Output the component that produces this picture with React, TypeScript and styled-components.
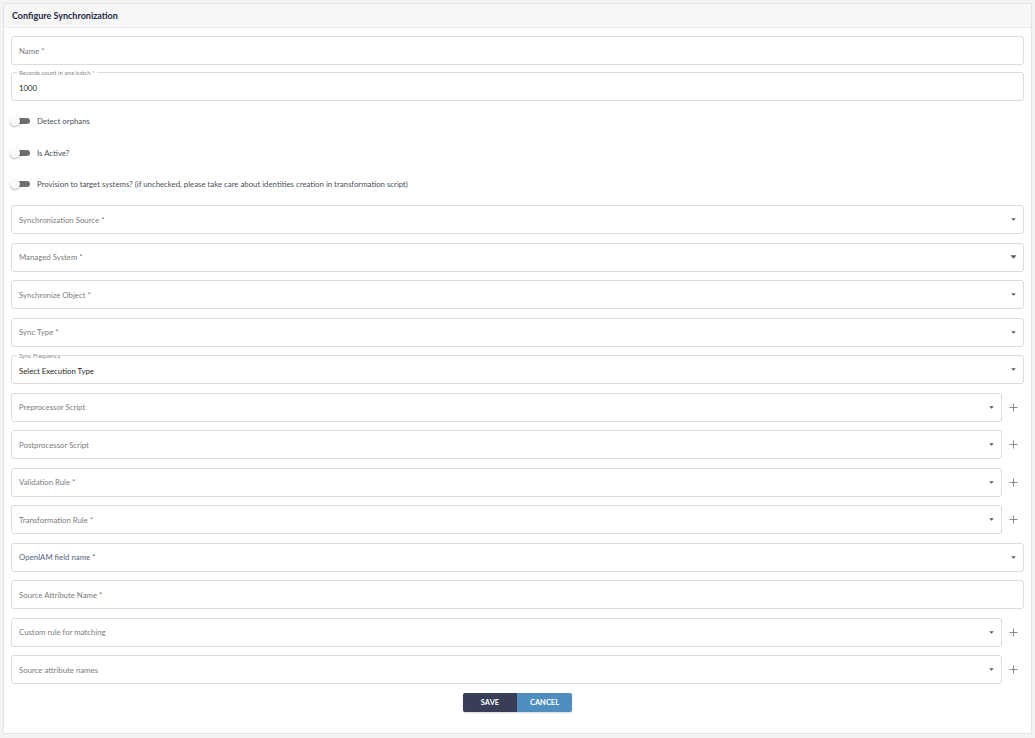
import { createGlobalStyle, styled } from "styled-components";

const GlobalStyle = createGlobalStyle`
  html, body {
    margin: 0;
    padding: 0;
    background: #f3f3f3;
    font-family: Lato, "Open Sans", "Liberation Sans", sans-serif;
  }
`;

type Field = {
  label: string;
  kind: "input" | "select";
  plus?: boolean;
  value?: string;
  legend?: string;
  accent?: boolean;
  bigCaret?: boolean;
};

const topFields: Field[] = [
  { label: "Name *", kind: "input" },
  { label: "Records count in one batch *", kind: "input", value: "1000", legend: "Records count in one batch *" },
];

const toggles = [
  "Detect orphans",
  "Is Active?",
  "Provision to target systems? (if unchecked, please take care about identities creation in transformation script)",
];

const selectFields: Field[] = [
  { label: "Synchronization Source *", kind: "select" },
  { label: "Managed System *", kind: "select", bigCaret: true },
  { label: "Synchronize Object *", kind: "select" },
  { label: "Sync Type *", kind: "select" },
  { label: "Select Execution Type", kind: "select", value: "Select Execution Type", legend: "Sync Frequency" },
  { label: "Preprocessor Script", kind: "select", plus: true },
  { label: "Postprocessor Script", kind: "select", plus: true },
  { label: "Validation Rule *", kind: "select", plus: true },
  { label: "Transformation Rule *", kind: "select", plus: true },
  { label: "OpenIAM field name *", kind: "select", accent: true },
  { label: "Source Attribute Name *", kind: "input" },
  { label: "Custom rule for matching", kind: "select", plus: true },
  { label: "Source attribute names", kind: "select", plus: true },
];

const Caret: React.FC<{ big?: boolean }> = ({ big }) => (
  <svg width={big ? 7 : 5} height={big ? 4 : 3} viewBox="0 0 6 4" style={{ marginRight: big ? 0 : 1 }}>
    <path d="M0 0.3 L6 0.3 L3 3.7 Z" fill="#555" />
  </svg>
);

const Plus = () => (
  <svg width="9" height="9" viewBox="0 0 9 9">
    <path d="M4.5 0.5 V8.5 M0.5 4.5 H8.5" stroke="#8a8a8a" strokeWidth="1" />
  </svg>
);

const FormField: React.FC<{ field: Field }> = ({ field }) => (
  <FieldRow>
    <Box>
      {field.legend && <Legend>{field.legend}</Legend>}
      <BoxText $filled={!!field.value} $accent={field.accent}>
        {field.value ?? field.label}
      </BoxText>
      {field.kind === "select" && <Caret big={field.bigCaret} />}
    </Box>
    {field.plus && (
      <PlusButton>
        <Plus />
      </PlusButton>
    )}
  </FieldRow>
);

export default function App() {
  return (
    <>
      <GlobalStyle />
      <Card>
        <Header>Configure Synchronization</Header>
        <Body>
          <Stack $gap={7}>
            {topFields.map((f) => (
              <FormField key={f.label} field={f} />
            ))}
          </Stack>
          <Toggles>
            {toggles.map((t) => (
              <ToggleRow key={t}>
                <Switch>
                  <Track />
                  <Knob />
                </Switch>
                <ToggleLabel>{t}</ToggleLabel>
              </ToggleRow>
            ))}
          </Toggles>
          <Stack $gap={8.5}>
            {selectFields.map((f) => (
              <FormField key={f.label} field={f} />
            ))}
          </Stack>
          <Actions>
            <ActionButton $variant="primary">Save</ActionButton>
            <ActionButton $variant="secondary">Cancel</ActionButton>
          </Actions>
        </Body>
      </Card>
    </>
  );
}

const Card = styled.div`
  margin: 3px 3px 0 3px;
  height: 731px;
  box-sizing: border-box;
  background: #fff;
  border: 1px solid #e4e4e4;
  display: flex;
  flex-direction: column;
`;

const Header = styled.div`
  height: 23px;
  display: flex;
  align-items: center;
  padding-left: 8px;
  background: #f7f7f7;
  border-bottom: 1px solid #ececec;
  font-size: 9px;
  font-weight: 700;
  color: #1d2742;
`;

const Body = styled.div`
  padding: 8px 7px 0 7px;
  display: flex;
  flex-direction: column;
`;

const Stack = styled.div<{ $gap: number }>`
  display: flex;
  flex-direction: column;
  gap: ${({ $gap }) => $gap}px;
`;

const FieldRow = styled.div`
  display: flex;
  align-items: center;
`;

const Box = styled.div`
  position: relative;
  flex: 1;
  height: 29px;
  box-sizing: border-box;
  border: 1px solid #dcdcdc;
  border-radius: 3px;
  display: flex;
  align-items: center;
  justify-content: space-between;
  padding: 0 6px 0 7px;
`;

const Legend = styled.span`
  position: absolute;
  top: -4px;
  left: 5px;
  padding: 0 2px;
  background: #fff;
  font-size: 6px;
  line-height: 7px;
  color: #8a8a8a;
`;

const BoxText = styled.span<{ $filled: boolean; $accent?: boolean }>`
  font-size: 7.8px;
  color: ${({ $filled, $accent }) => ($filled ? "#262626" : $accent ? "#56637d" : "#7d7d7d")};
  ${({ $filled }) => $filled && "margin-top: 2px;"}
`;

const PlusButton = styled.div`
  width: 21px;
  display: flex;
  justify-content: center;
  align-items: center;
  padding-left: 1px;
`;

const Toggles = styled.div`
  display: flex;
  flex-direction: column;
  margin: 4px 0 5px 0;
`;

const ToggleRow = styled.div`
  height: 31.7px;
  display: flex;
  align-items: center;
  gap: 7px;
`;

const Switch = styled.div`
  position: relative;
  width: 20px;
  height: 10px;
  margin-left: -1px;
`;

const Track = styled.div`
  position: absolute;
  left: 5px;
  top: 2px;
  width: 15px;
  height: 6px;
  border-radius: 3px;
  background: #6f6f6f;
`;

const Knob = styled.div`
  position: absolute;
  left: 0;
  top: 0;
  width: 10px;
  height: 10px;
  border-radius: 50%;
  background: #fafafa;
  box-shadow: 0 1px 2px rgba(0, 0, 0, 0.3);
`;

const ToggleLabel = styled.span`
  font-size: 7.8px;
  color: #4a4f5a;
`;

const Actions = styled.div`
  display: flex;
  justify-content: center;
  margin-top: 9px;
`;

const ActionButton = styled.button<{ $variant: "primary" | "secondary" }>`
  width: ${({ $variant }) => ($variant === "primary" ? "54px" : "55px")};
  height: 19px;
  border: none;
  border-radius: ${({ $variant }) => ($variant === "primary" ? "2px 0 0 2px" : "0 2px 2px 0")};
  background: ${({ $variant }) => ($variant === "primary" ? "#383e55" : "#4f8fbf")};
  color: #fff;
  font-family: inherit;
  font-size: 7.5px;
  font-weight: 700;
  text-transform: uppercase;
  padding: 0;
  box-shadow: 0 1px 2px rgba(0, 0, 0, 0.15);
`;
